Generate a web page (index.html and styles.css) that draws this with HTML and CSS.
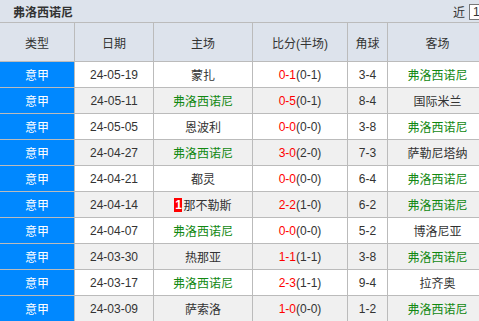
FILE: index.html
```html
<!DOCTYPE html>
<html>
<head>
<meta charset="utf-8">
<link rel="stylesheet" href="styles.css">
</head>
<body>
<div class="panel">
  <div class="titlebar">
    <span class="title">弗洛西诺尼</span>
    <span class="recent">近 <span class="sel">1</span></span>
  </div>
  <div class="grid head">
    <div class="c">类型</div><div class="c">日期</div><div class="c">主场</div><div class="c">比分(半场)</div><div class="c">角球</div><div class="c">客场</div>
  </div>
  <div class="grid row">
    <div class="c lg">意甲</div><div class="c">24-05-19</div><div class="c">蒙扎</div><div class="c"><span class="r">0-1</span>(0-1)</div><div class="c">3-4</div><div class="c g">弗洛西诺尼</div>
  </div>
  <div class="grid row alt">
    <div class="c lg">意甲</div><div class="c">24-05-11</div><div class="c g">弗洛西诺尼</div><div class="c"><span class="r">0-5</span>(0-1)</div><div class="c">8-4</div><div class="c">国际米兰</div>
  </div>
  <div class="grid row">
    <div class="c lg">意甲</div><div class="c">24-05-05</div><div class="c">恩波利</div><div class="c"><span class="r">0-0</span>(0-0)</div><div class="c">3-8</div><div class="c g">弗洛西诺尼</div>
  </div>
  <div class="grid row alt">
    <div class="c lg">意甲</div><div class="c">24-04-27</div><div class="c g">弗洛西诺尼</div><div class="c"><span class="r">3-0</span>(2-0)</div><div class="c">7-3</div><div class="c">萨勒尼塔纳</div>
  </div>
  <div class="grid row">
    <div class="c lg">意甲</div><div class="c">24-04-21</div><div class="c">都灵</div><div class="c"><span class="r">0-0</span>(0-0)</div><div class="c">6-4</div><div class="c g">弗洛西诺尼</div>
  </div>
  <div class="grid row alt">
    <div class="c lg">意甲</div><div class="c">24-04-14</div><div class="c"><span class="badge">1</span>那不勒斯</div><div class="c"><span class="r">2-2</span>(1-0)</div><div class="c">6-2</div><div class="c g">弗洛西诺尼</div>
  </div>
  <div class="grid row">
    <div class="c lg">意甲</div><div class="c">24-04-07</div><div class="c g">弗洛西诺尼</div><div class="c"><span class="r">0-0</span>(0-0)</div><div class="c">5-2</div><div class="c">博洛尼亚</div>
  </div>
  <div class="grid row alt">
    <div class="c lg">意甲</div><div class="c">24-03-30</div><div class="c">热那亚</div><div class="c"><span class="r">1-1</span>(1-1)</div><div class="c">3-8</div><div class="c g">弗洛西诺尼</div>
  </div>
  <div class="grid row">
    <div class="c lg">意甲</div><div class="c">24-03-17</div><div class="c g">弗洛西诺尼</div><div class="c"><span class="r">2-3</span>(1-1)</div><div class="c">9-4</div><div class="c">拉齐奥</div>
  </div>
  <div class="grid row alt">
    <div class="c lg">意甲</div><div class="c">24-03-09</div><div class="c">萨索洛</div><div class="c"><span class="r">1-0</span>(0-0)</div><div class="c">1-2</div><div class="c g">弗洛西诺尼</div>
  </div>
</div>
</body>
</html>
```
FILE: styles.css
```css
html, body {
  margin: 0;
  padding: 0;
  background: #fff;
}
body {
  font-family: "Liberation Sans", "Noto Sans CJK SC", sans-serif;
  font-size: 12px;
  color: #333;
  width: 479px;
  overflow: hidden;
}
.panel {
  width: 479px;
  overflow: hidden;
}
.titlebar {
  background: #dde3ec;
  border-bottom: 1px solid #bbb;
  display: flex;
  align-items: center;
  padding-left: 13px;
  box-sizing: border-box;
  height: 23px;
}
.title {
  font-weight: bold;
  color: #333;
  flex: 1;
}
.recent {
  display: flex;
  align-items: center;
  color: #333;
  gap: 4px;
}
.sel {
  display: inline-block;
  border: 1px solid #777;
  border-right: none;
  background: #fff;
  height: 14px;
  line-height: 14px;
  padding-left: 3px;
  width: 6px;
  margin-top: 2px;
}
.grid {
  display: grid;
  grid-template-columns: 75px 79px 99px 95px 40px 1fr;
  border-bottom: 1px solid #bbb;
}
.c {
  border-right: 1px solid #bbb;
  display: flex;
  align-items: center;
  justify-content: center;
  white-space: nowrap;
}
.c:last-child {
  border-right: none;
  padding-left: 8px;
}
.head {
  height: 38px;
  background: #dde3ec;
}
.row {
  height: 25px;
  background: #fff;
}
.row.alt {
  background: #f0f0f0;
}
.lg {
  background: #0088ff;
  color: #fff;
}
.g {
  color: #118811;
}
.r {
  color: #ff0000;
}
.badge {
  display: inline-block;
  background: #ff0000;
  color: #fff;
  font-weight: bold;
  width: 8px;
  height: 14px;
  line-height: 14px;
  text-align: center;
  margin-right: 1px;
}
```
